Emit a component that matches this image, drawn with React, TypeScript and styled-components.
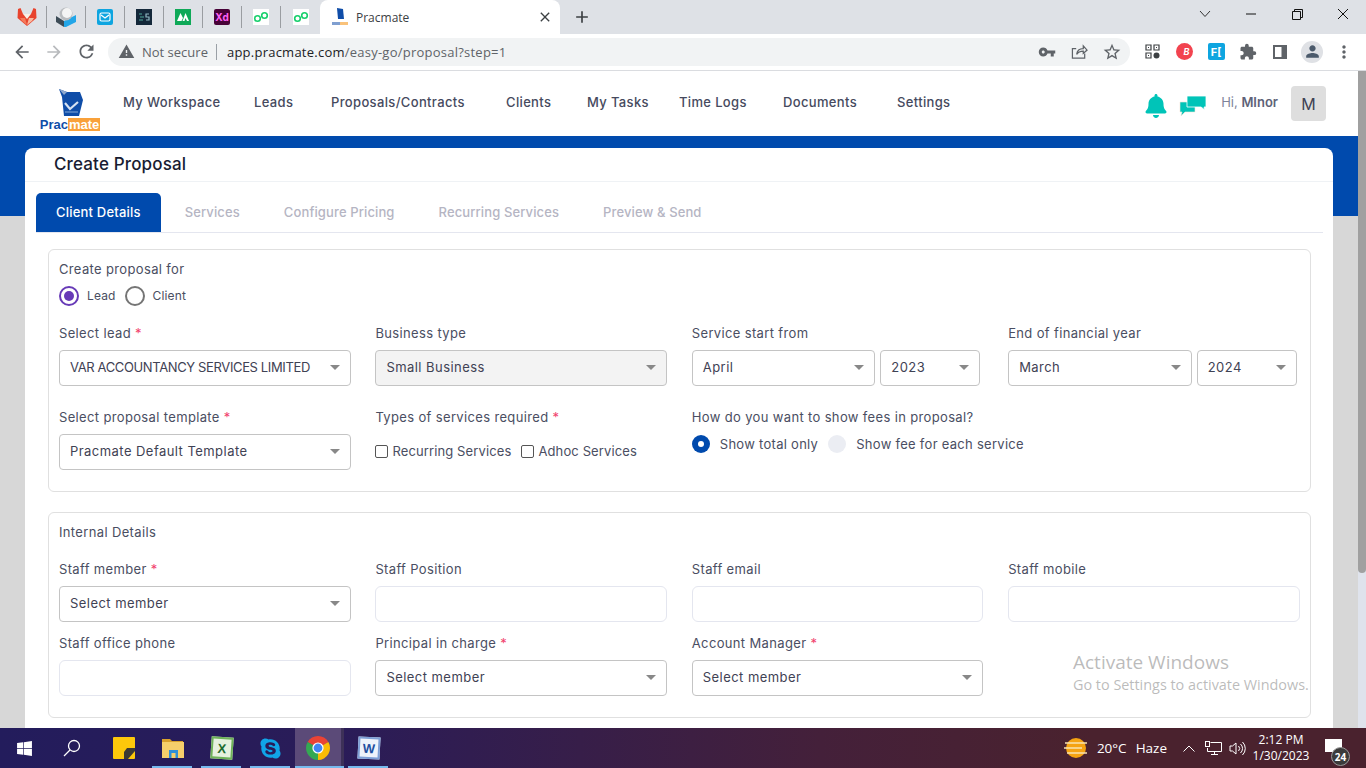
import React from "react";
import styled, { createGlobalStyle } from "styled-components";
import {
    MdAdd,
    MdArrowBack,
    MdArrowForward,
    MdClose,
    MdExtension,
    MdMoreVert,
    MdPerson,
    MdRefresh,
    MdStarBorder,
    MdVpnKey,
    MdWarning,
} from "react-icons/md";
import { FaBell, FaSkype, FaWindows } from "react-icons/fa";

const NAV_ITEMS = [
    { label: "My Workspace", width: 131 },
    { label: "Leads", width: 77 },
    { label: "Proposals/Contracts", width: 175 },
    { label: "Clients", width: 81 },
    { label: "My Tasks", width: 92 },
    { label: "Time Logs", width: 104 },
    { label: "Documents", width: 114 },
    { label: "Settings", width: 60 },
];

const TABS = ["Client Details", "Services", "Configure Pricing", "Recurring Services", "Preview & Send"];

const GitlabIcon = () => (
    <svg width="20" height="20" viewBox="0 0 20 20">
        <polygon points="1,2 3.5,1 6,7 14,7 16.5,1 19,2 19.5,11 10,19 0.5,11" fill="#e8432d" />
        <polygon points="6,7 14,7 10,12" fill="#f9efe6" />
        <polygon points="3,11 8,11 10,18 5,14" fill="#f47b5b" />
        <polygon points="12,11 17,11 15,14 10,18" fill="#f9b9a0" />
    </svg>
);

const BallIcon = () => (
    <svg width="20" height="20" viewBox="0 0 20 20">
        <polygon points="0,9 8,14 8,20 0,15" fill="#3d4c57" />
        <polygon points="8,14 20,8 20,15 10,20 8,20" fill="#23a6e8" />
        <circle cx="10" cy="7" r="6.5" fill="#b9bcbf" />
        <circle cx="11" cy="6" r="5" fill="#f4f4f4" />
    </svg>
);

const MailIcon = () => (
    <svg width="16" height="16" viewBox="0 0 16 16">
        <rect width="16" height="16" rx="2" fill="#0ea5e0" />
        <rect x="3" y="4" width="10" height="8" rx="1.5" fill="none" stroke="#fff" strokeWidth="1.2" />
        <path d="M4 6l4 3 4-3" fill="none" stroke="#fff" strokeWidth="1.2" />
    </svg>
);

const DarkIcon = () => (
    <svg width="16" height="16" viewBox="0 0 16 16">
        <rect width="16" height="16" fill="#14283a" />
        <path d="M3 5h3M4 8h4M3 11h4" stroke="#4fa79a" strokeWidth="1.2" />
        <path d="M13 5H10v3h3v3h-3" fill="none" stroke="#8fb7c2" strokeWidth="1.2" />
    </svg>
);

const GreenMIcon = () => (
    <svg width="16" height="16" viewBox="0 0 16 16">
        <rect width="16" height="16" fill="#0fa958" />
        <path d="M2 12l3.5-8L8 9l-1.5 3zM7.5 12l3-8L14 12h-2l-1.5-3L9.5 12z" fill="#fff" />
    </svg>
);

const LinkIcon = () => (
    <svg width="16" height="16" viewBox="0 0 16 16">
        <rect width="16" height="16" fill="#fff" />
        <circle cx="4.5" cy="9.5" r="2.8" fill="none" stroke="#16cf6b" strokeWidth="1.6" />
        <circle cx="11.5" cy="6.5" r="2.8" fill="none" stroke="#16cf6b" strokeWidth="1.6" />
    </svg>
);

const DocMark = () => (
    <svg width="25" height="28" viewBox="0 0 25 28">
        <polygon points="1,0 9,3 22,3 25,11 21,27 6,27 4,8" fill="#0f4da8" />
        <polygon points="1,0 9,3 6,6" fill="#8fa9cf" />
        <path d="M7 14l5 6 8-7" fill="none" stroke="#d6e2f2" strokeWidth="2.2" />
        <path d="M7 23h13" stroke="#5f8bc9" strokeWidth="1.5" />
    </svg>
);

const TabLogo = () => (
    <svg width="16" height="18" viewBox="0 0 16 18">
        <polygon points="5,0 11,1 12,11 6,11" fill="#0f4da8" />
        <rect x="0" y="14" width="8" height="3" fill="#7f9fd0" />
        <rect x="8" y="14" width="8" height="3" fill="#f9c27a" />
    </svg>
);

const ShareIcon = () => (
    <svg width="17" height="17" viewBox="0 0 18 18" fill="none" stroke="#5f6368" strokeWidth="1.3">
        <path d="M14.5 11v5h-13V6h4" />
        <path d="M6 12c.5-4 3.5-6 7-6V3l4 4.5L13 11V8.5c-3 0-5.5 1-7 3.5z" />
    </svg>
);

const QrIcon = () => (
    <svg width="15" height="15" viewBox="0 0 15 15">
        <rect width="15" height="15" fill="#fff" />
        <path d="M1 1h5v5H1zM9 1h5v5H9zM1 9h5v5H1z" fill="none" stroke="#3c4043" strokeWidth="1.2" />
        <path d="M3 3h1v1H3zM11 3h1v1h-1zM3 11h1v1H3z" fill="#3c4043" />
        <circle cx="11.5" cy="11.5" r="3" fill="#3c4043" />
    </svg>
);

const PanelIcon = () => (
    <svg width="14" height="14" viewBox="0 0 14 14">
        <rect x="1" y="1" width="12" height="12" fill="none" stroke="#5f6368" strokeWidth="2" />
        <rect x="8.5" y="1" width="4.5" height="12" fill="#5f6368" />
    </svg>
);

const ChatIcon = () => (
    <svg width="28" height="22" viewBox="0 0 28 22">
        <path d="M1 7h15v10H6l-4 4 1-4H1z" fill="#00c4b8" stroke="#f5e6d8" strokeWidth="0.6" />
        <path d="M8 1h19v11h-2l1 3-4-3H8z" fill="#00c4b8" stroke="#fff" strokeWidth="0.8" />
    </svg>
);

const SearchGlass = () => (
    <svg width="18" height="18" viewBox="0 0 18 18" fill="none" stroke="#fff" strokeWidth="1.3">
        <circle cx="11" cy="7" r="5.5" />
        <path d="M7 11l-6 6" />
    </svg>
);

const StickyIcon = () => (
    <svg width="22" height="22" viewBox="0 0 22 22">
        <rect width="22" height="22" rx="1" fill="#fdc80b" />
        <polygon points="11,22 11,15 14,11 22,11 22,14 15,22" fill="#3d3a33" />
    </svg>
);

const FolderIcon = () => (
    <svg width="22" height="20" viewBox="0 0 22 20">
        <path d="M0 1h8l2 2h11v3H0z" fill="#d9a12c" />
        <rect y="4" width="22" height="16" fill="#f6cf6b" />
        <rect x="7" y="12" width="9" height="8" fill="#2f8fd8" />
        <rect x="9.5" y="15" width="4" height="5" fill="#f6cf6b" />
    </svg>
);

const ChromeIcon = () => (
    <svg width="24" height="24" viewBox="0 0 24 24">
        <path d="M12 12L1.61 6A12 12 0 0 1 22.39 6Z" fill="#ea4335" />
        <path d="M12 12L22.39 6A12 12 0 0 1 12 24Z" fill="#fbbc04" />
        <path d="M12 12L12 24A12 12 0 0 1 1.61 6Z" fill="#34a853" />
        <circle cx="12" cy="12" r="5.6" fill="#fff" />
        <circle cx="12" cy="12" r="4.4" fill="#4285f4" />
    </svg>
);

const WeatherIcon = () => (
    <svg width="24" height="20" viewBox="0 0 24 20">
        <circle cx="12" cy="10" r="10" fill="#f5a312" />
        <path d="M1 5h22M0 10h18M3 15h20" stroke="#f9e3b0" strokeWidth="1.6" />
    </svg>
);

const NetworkIcon = () => (
    <svg width="17" height="15" viewBox="0 0 17 15" fill="none" stroke="#fff" strokeWidth="1">
        <path d="M5.5 1.5h11v9h-14V7" />
        <rect x="0.5" y="0.5" width="4" height="5" />
        <path d="M9.5 10.5v3M6 13.5h7" />
    </svg>
);

const VolumeIcon = () => (
    <svg width="17" height="15" viewBox="0 0 17 15" fill="none" stroke="#fff" strokeWidth="1">
        <path d="M1 5h2.5L7 2v11L3.5 10H1z" />
        <path d="M9.5 5a3.5 3.5 0 0 1 0 5M11.5 3a6 6 0 0 1 0 9M13.5 1a9 9 0 0 1 0 13" />
    </svg>
);

const Select = ({ value, disabled, caps }: { value: string; disabled?: boolean; caps?: boolean }) => (
    <SelectBox $disabled={disabled} $caps={caps}>
        <SelectText>{value}</SelectText>
        <Caret />
    </SelectBox>
);

const Radio = ({ checked }: { checked?: boolean }) => <RadioMark $checked={checked} />;

const FeeRadio = ({ checked }: { checked?: boolean }) => <FeeMark $checked={checked} />;

const App = () => {
    return (
        <Screen>
            <GlobalStyle />
            <TabStrip>
                <PinnedTab><GitlabIcon /></PinnedTab>
                <PinnedTab><BallIcon /></PinnedTab>
                <PinnedTab><MailIcon /></PinnedTab>
                <PinnedTab><DarkIcon /></PinnedTab>
                <PinnedTab><GreenMIcon /></PinnedTab>
                <PinnedTab><XdIcon>Xd</XdIcon></PinnedTab>
                <PinnedTab><LinkIcon /></PinnedTab>
                <PinnedTab $last><LinkIcon /></PinnedTab>
                <ActiveTab>
                    <TabFavicon><TabLogo /></TabFavicon>
                    <TabTitle>Pracmate</TabTitle>
                    <MdClose size={16} color="#3c4043" />
                </ActiveTab>
                <NewTab><MdAdd size={20} color="#3c4043" /></NewTab>
                <WindowControls>
                    <WindowButton>
                        <svg width="12" height="8" viewBox="0 0 12 8" fill="none" stroke="#333" strokeWidth="1"><path d="M1 1l5 5.5L11 1" /></svg>
                    </WindowButton>
                    <WindowButton>
                        <svg width="12" height="2" viewBox="0 0 12 2" stroke="#111" strokeWidth="1"><path d="M1 1h10" /></svg>
                    </WindowButton>
                    <WindowButton>
                        <svg width="11" height="11" viewBox="0 0 11 11" fill="none" stroke="#111" strokeWidth="1"><path d="M.5 2.5h8v8h-8zM2.5 2.5v-2h8v8h-2" /></svg>
                    </WindowButton>
                    <WindowButton>
                        <svg width="12" height="12" viewBox="0 0 12 12" stroke="#111" strokeWidth="1"><path d="M1 1l10 10M11 1L1 11" /></svg>
                    </WindowButton>
                </WindowControls>
            </TabStrip>

            <Toolbar>
                <ToolButton><MdArrowBack size={20} color="#5f6368" /></ToolButton>
                <ToolButton><MdArrowForward size={20} color="#b8babd" /></ToolButton>
                <ToolButton><MdRefresh size={21} color="#5f6368" /></ToolButton>
                <Omnibox>
                    <MdWarning size={17} color="#5f6368" />
                    <NotSecure>Not secure</NotSecure>
                    <OmniDivider />
                    <Url>
                        <UrlHost>app.pracmate.com</UrlHost>/easy-go/proposal?step=1
                    </Url>
                    <OmniActions>
                        <OmniAction><MdVpnKey size={18} color="#5f6368" /></OmniAction>
                        <OmniAction><ShareIcon /></OmniAction>
                        <OmniAction><MdStarBorder size={20} color="#5f6368" /></OmniAction>
                    </OmniActions>
                </Omnibox>
                <Extensions>
                    <ToolSlot><QrIcon /></ToolSlot>
                    <ToolSlot><RedBadge>B</RedBadge></ToolSlot>
                    <ToolSlot><BlueBadge>F[</BlueBadge></ToolSlot>
                    <ToolSlot><MdExtension size={18} color="#5f6368" /></ToolSlot>
                    <ToolSlot><PanelIcon /></ToolSlot>
                    <ToolSlot><ProfileCircle><MdPerson size={19} color="#4b5a6b" /></ProfileCircle></ToolSlot>
                    <ToolSlot><MdMoreVert size={20} color="#5f6368" /></ToolSlot>
                </Extensions>
            </Toolbar>

            <Viewport>
                <Page>
                    <Header>
                        <Logo>
                            <DocMark />
                            <LogoText>
                                <LogoPrac>Prac</LogoPrac>
                                <LogoMate>mate</LogoMate>
                            </LogoText>
                        </Logo>
                        <Nav>
                            {NAV_ITEMS.map((item) => (
                                <NavItem key={item.label} $width={item.width}>{item.label}</NavItem>
                            ))}
                        </Nav>
                        <UserArea>
                            <BellSlot><FaBell size={24} color="#00c4b8" /></BellSlot>
                            <ChatSlot><ChatIcon /></ChatSlot>
                            <Greeting>Hi, <strong>MInor</strong></Greeting>
                            <Avatar>M</Avatar>
                        </UserArea>
                    </Header>

                    <Main>
                        <Card>
                            <CardTitle>Create Proposal</CardTitle>
                            <Tabs>
                                {TABS.map((tab, i) => (
                                    <Tab key={tab} $active={i === 0}>{tab}</Tab>
                                ))}
                            </Tabs>

                            <Panel>
                                <PanelHeading>Create proposal for</PanelHeading>
                                <RadioRow>
                                    <Radio checked />
                                    <RadioLabel>Lead</RadioLabel>
                                    <Radio />
                                    <RadioLabel>Client</RadioLabel>
                                </RadioRow>
                                <FieldGrid $rowGap={21}>
                                    <Field>
                                        <Label>Select lead <Required>*</Required></Label>
                                        <Select value="VAR ACCOUNTANCY SERVICES LIMITED" caps />
                                    </Field>
                                    <Field>
                                        <Label>Business type</Label>
                                        <Select value="Small Business" disabled />
                                    </Field>
                                    <Field>
                                        <Label>Service start from</Label>
                                        <SelectPair>
                                            <Select value="April" />
                                            <Select value="2023" />
                                        </SelectPair>
                                    </Field>
                                    <Field>
                                        <Label>End of financial year</Label>
                                        <SelectPair>
                                            <Select value="March" />
                                            <Select value="2024" />
                                        </SelectPair>
                                    </Field>
                                    <Field>
                                        <Label>Select proposal template <Required>*</Required></Label>
                                        <Select value="Pracmate Default Template" />
                                    </Field>
                                    <Field>
                                        <Label>Types of services required <Required>*</Required></Label>
                                        <CheckRow>
                                            <CheckBox />
                                            <CheckLabel>Recurring Services</CheckLabel>
                                            <CheckBox />
                                            <CheckLabel>Adhoc Services</CheckLabel>
                                        </CheckRow>
                                    </Field>
                                    <WideField>
                                        <Label>How do you want to show fees in proposal?</Label>
                                        <FeeRow>
                                            <FeeRadio checked />
                                            <FeeLabel>Show total only</FeeLabel>
                                            <FeeRadio />
                                            <FeeLabel>Show fee for each service</FeeLabel>
                                        </FeeRow>
                                    </WideField>
                                </FieldGrid>
                            </Panel>

                            <Panel>
                                <InternalHeading>Internal Details</InternalHeading>
                                <FieldGrid $rowGap={11}>
                                    <Field>
                                        <Label>Staff member <Required>*</Required></Label>
                                        <Select value="Select member" />
                                    </Field>
                                    <Field>
                                        <Label>Staff Position</Label>
                                        <TextInput />
                                    </Field>
                                    <Field>
                                        <Label>Staff email</Label>
                                        <TextInput />
                                    </Field>
                                    <Field>
                                        <Label>Staff mobile</Label>
                                        <TextInput />
                                    </Field>
                                    <Field>
                                        <Label>Staff office phone</Label>
                                        <TextInput />
                                    </Field>
                                    <Field>
                                        <Label>Principal in charge <Required>*</Required></Label>
                                        <Select value="Select member" />
                                    </Field>
                                    <Field>
                                        <Label>Account Manager <Required>*</Required></Label>
                                        <Select value="Select member" />
                                    </Field>
                                </FieldGrid>
                            </Panel>
                        </Card>
                    </Main>

                    <Watermark>
                        <WatermarkTitle>Activate Windows</WatermarkTitle>
                        <WatermarkText>Go to Settings to activate Windows.</WatermarkText>
                    </Watermark>
                </Page>
                <Scrollbar>
                    <ScrollThumb />
                </Scrollbar>
            </Viewport>

            <Taskbar>
                <TaskButton><FaWindows size={17} color="#fff" /></TaskButton>
                <TaskButton><SearchGlass /></TaskButton>
                <TaskApps>
                    <TaskButton $wide><StickyIcon /></TaskButton>
                    <TaskButton $wide $open><FolderIcon /></TaskButton>
                    <TaskButton $wide $open><ExcelIcon><span>X</span></ExcelIcon></TaskButton>
                    <TaskButton $wide $open><FaSkype size={23} color="#10a5e8" /></TaskButton>
                    <TaskButton $wide $open $active><ChromeIcon /></TaskButton>
                    <TaskButton $wide $open><WordIcon><span>W</span></WordIcon></TaskButton>
                </TaskApps>
                <Tray>
                    <WeatherIcon />
                    <TrayText>20°C</TrayText>
                    <TrayText>Haze</TrayText>
                    <TraySlot $first>
                        <svg width="12" height="7" viewBox="0 0 12 7" fill="none" stroke="#fff" strokeWidth="1"><path d="M.5 6.5L6 1l5.5 5.5" /></svg>
                    </TraySlot>
                    <TraySlot><NetworkIcon /></TraySlot>
                    <TraySlot><VolumeIcon /></TraySlot>
                    <Clock>
                        <span>2:12 PM</span>
                        <span>1/30/2023</span>
                    </Clock>
                    <Notify>
                        <NotifyBubble />
                        <NotifyCount>24</NotifyCount>
                    </Notify>
                </Tray>
            </Taskbar>
        </Screen>
    );
};

export default App;

const GlobalStyle = createGlobalStyle`
    html, body {
        margin: 0;
        height: 100%;
        overflow: hidden;
        background: #fff;
    }
    * {
        box-sizing: border-box;
    }
`;

const Screen = styled.div`
    display: flex;
    flex-direction: column;
    height: 100vh;
    font-family: Inter, "Liberation Sans", sans-serif;
`;

const TabStrip = styled.div`
    display: flex;
    align-items: center;
    height: 34px;
    flex-shrink: 0;
    padding-left: 8px;
    background: #dee1e6;
`;

const PinnedTab = styled.div<{ $last?: boolean }>`
    display: flex;
    align-items: center;
    justify-content: center;
    width: 39px;
    height: 22px;
    border-right: ${(p) => (p.$last ? "none" : "1px solid #9a9da1")};
`;

const XdIcon = styled.div`
    display: flex;
    align-items: center;
    justify-content: center;
    width: 16px;
    height: 16px;
    border-radius: 2px;
    background: #470137;
    color: #ff61f6;
    font-size: 10px;
    font-weight: 700;
`;

const ActiveTab = styled.div`
    display: flex;
    align-items: center;
    align-self: flex-end;
    width: 240px;
    height: 34px;
    padding: 0 7px 0 12px;
    background: #fff;
    border-radius: 8px 8px 0 0;
`;

const TabFavicon = styled.div`
    display: flex;
    justify-content: center;
    width: 16px;
`;

const TabTitle = styled.div`
    flex: 1;
    margin-left: 8px;
    font-family: "Open Sans", sans-serif;
    font-size: 12px;
    color: #3c4043;
`;

const NewTab = styled.div`
    display: flex;
    margin-left: 12px;
`;

const WindowControls = styled.div`
    display: flex;
    margin-left: auto;
    align-self: flex-start;
`;

const WindowButton = styled.div`
    display: flex;
    align-items: center;
    justify-content: center;
    width: 46px;
    height: 28px;
`;

const Toolbar = styled.div`
    display: flex;
    align-items: center;
    height: 37px;
    flex-shrink: 0;
    padding: 0 6px 1px 6px;
    background: #fff;
    border-bottom: 1px solid #dadce0;
`;

const ToolButton = styled.div`
    display: flex;
    align-items: center;
    justify-content: center;
    width: 32px;
    height: 28px;
`;

const Omnibox = styled.div`
    display: flex;
    align-items: center;
    width: 1022px;
    height: 28px;
    margin-left: 6px;
    padding: 0 2px 0 10px;
    border-radius: 14px;
    background: #f1f3f4;
    font-family: "Open Sans", sans-serif;
    font-size: 13px;
`;

const NotSecure = styled.span`
    margin-left: 7px;
    color: #5f6368;
`;

const OmniDivider = styled.div`
    width: 1px;
    height: 16px;
    margin: 0 10px 0 8px;
    background: #9aa0a6;
`;

const Url = styled.span`
    color: #5f6368;
    letter-spacing: 0.24px;
`;

const UrlHost = styled.span`
    color: #202124;
`;

const OmniActions = styled.div`
    display: flex;
    margin-left: auto;
`;

const OmniAction = styled.div`
    display: flex;
    align-items: center;
    justify-content: center;
    width: 32.5px;
`;

const Extensions = styled.div`
    display: flex;
    margin-left: 6px;
`;

const ToolSlot = styled.div`
    display: flex;
    align-items: center;
    justify-content: center;
    width: 32px;
    height: 28px;
`;

const RedBadge = styled.div`
    display: flex;
    align-items: center;
    justify-content: flex-end;
    width: 17px;
    height: 17px;
    padding-right: 3px;
    border-radius: 50%;
    background: #f2434f;
    color: #fff;
    font-size: 9px;
    font-weight: 700;
    font-style: italic;
`;

const BlueBadge = styled.div`
    display: flex;
    align-items: center;
    justify-content: center;
    width: 17px;
    height: 17px;
    border-radius: 2px;
    background: #0ea5e0;
    color: #fff;
    font-size: 11px;
    font-weight: 700;
`;

const ProfileCircle = styled.div`
    display: flex;
    align-items: center;
    justify-content: center;
    width: 22px;
    height: 22px;
    border-radius: 50%;
    background: #dfe1e5;
`;

const Viewport = styled.div`
    display: flex;
    flex: 1;
    min-height: 0;
`;

const Page = styled.div`
    position: relative;
    flex: 1;
    display: flex;
    flex-direction: column;
    min-width: 0;
    overflow: hidden;
    background: #d7d7d7;
`;

const Header = styled.div`
    display: flex;
    align-items: center;
    height: 65px;
    flex-shrink: 0;
    background: #fff;
`;

const Logo = styled.div`
    display: flex;
    flex-direction: column;
    align-items: center;
    width: 60px;
    margin: 12px 0 0 40px;
    line-height: 0;
`;

const LogoText = styled.div`
    display: flex;
    align-items: center;
    height: 13px;
    margin-top: 1px;
    font-family: "Liberation Sans", sans-serif;
    font-size: 13px;
    font-weight: 700;
    line-height: 13px;
`;

const LogoPrac = styled.span`
    color: #0f4da8;
`;

const LogoMate = styled.span`
    padding: 0 1px;
    background: #f9a13a;
    color: #fff;
`;

const Nav = styled.nav`
    display: flex;
    margin-left: 23px;
    padding-bottom: 3px;
`;

const NavItem = styled.div<{ $width: number }>`
    width: ${(p) => p.$width}px;
    font-size: 13px;
    font-weight: 500;
    letter-spacing: 0.35px;
    white-space: nowrap;
    color: #464a5e;
`;

const UserArea = styled.div`
    display: flex;
    align-items: center;
    margin-left: auto;
    margin-right: 32px;
`;

const BellSlot = styled.div`
    display: flex;
    margin-top: 4px;
`;

const ChatSlot = styled.div`
    display: flex;
    margin: 4px 0 0 11px;
`;

const Greeting = styled.div`
    margin: 0 0 4px 14px;
    font-size: 13px;
    color: #7e8299;
    strong {
        font-weight: 600;
        color: #5e6278;
    }
`;

const Avatar = styled.div`
    display: flex;
    align-items: center;
    justify-content: center;
    width: 35px;
    height: 35px;
    margin-left: 13px;
    border-radius: 4px;
    background: #dedede;
    color: #3f4254;
    font-size: 16px;
`;

const Main = styled.div`
    flex: 1;
    display: flex;
    min-height: 0;
    padding: 12px 25px 0;
    background: linear-gradient(#004aad 80px, #d7d7d7 80px);
`;

const Card = styled.div`
    flex: 1;
    min-width: 0;
    background: #fff;
    border-radius: 8px 8px 0 0;
`;

const CardTitle = styled.div`
    display: flex;
    align-items: center;
    height: 34px;
    padding: 0 0 2px 29px;
    border-bottom: 1px solid #eff2f5;
    font-size: 17px;
    font-weight: 500;
    letter-spacing: 0.15px;
    color: #181c32;
`;

const Tabs = styled.div`
    display: flex;
    gap: 4px;
    height: 40px;
    margin: 11px 10px 0 11px;
    border-bottom: 1px solid #e4e6ef;
`;

const Tab = styled.div<{ $active?: boolean }>`
    display: flex;
    align-items: center;
    padding: 0 20px 1px;
    height: 39px;
    border-radius: 5px 5px 0 0;
    background: ${(p) => (p.$active ? "#004aad" : "transparent")};
    color: ${(p) => (p.$active ? "#fff" : "#b5b5c3")};
    font-size: 13px;
    font-weight: 500;
    letter-spacing: ${(p) => (p.$active ? 0.2 : 0.12)}px;
`;

const Panel = styled.section`
    margin: 16px 22px 20px 23px;
    padding: 9px 10px 21px;
    border: 1px solid #e0e0e0;
    border-radius: 6px;
`;

const Text = styled.div`
    height: 20px;
    font-size: 13px;
    line-height: 20px;
    letter-spacing: 0.35px;
    color: #4a4e62;
    white-space: nowrap;
`;

const PanelHeading = styled(Text)``;

const InternalHeading = styled(Text)`
    margin-bottom: 17px;
`;

const RadioRow = styled.div`
    display: flex;
    align-items: center;
    height: 22px;
    margin: 6px 0 16px;
`;

const RadioMark = styled.span<{ $checked?: boolean }>`
    display: flex;
    align-items: center;
    justify-content: center;
    width: 20px;
    height: 20px;
    border-radius: 50%;
    border: 2px solid ${(p) => (p.$checked ? "#673ab7" : "#757575")};
    &::after {
        content: "";
        width: 10px;
        height: 10px;
        border-radius: 50%;
        background: ${(p) => (p.$checked ? "#673ab7" : "transparent")};
    }
`;

const RadioLabel = styled(Text)`
    margin: 0 9px 0 8px;
    font-size: 12px;
    letter-spacing: 0.15px;
`;

const FieldGrid = styled.div<{ $rowGap: number }>`
    display: grid;
    grid-template-columns: repeat(4, 291.6px);
    column-gap: 24.8px;
    row-gap: ${(p) => p.$rowGap}px;
`;

const Field = styled.div`
    min-width: 0;
`;

const WideField = styled(Field)`
    grid-column: span 2;
`;

const Label = styled(Text)`
    margin-bottom: 7px;
`;

const Required = styled.span`
    color: #f1416c;
`;

const SelectBox = styled.div<{ $disabled?: boolean; $caps?: boolean }>`
    position: relative;
    display: flex;
    align-items: center;
    width: 100%;
    height: 36px;
    padding: 0 0 2px 10px;
    border: 1px solid #c4c4c4;
    border-radius: 4px;
    background: ${(p) => (p.$disabled ? "#f3f3f3" : "#fff")};
    font-size: 13px;
    letter-spacing: ${(p) => (p.$caps ? -0.37 : 0.45)}px;
    color: #3f4254;
    white-space: nowrap;
`;

const SelectText = styled.span``;

const Caret = styled.span`
    position: absolute;
    right: 10px;
    top: 14px;
    border-left: 5px solid transparent;
    border-right: 5px solid transparent;
    border-top: 5px solid #888;
`;

const SelectPair = styled.div`
    display: grid;
    grid-template-columns: 183.5px 100px;
    gap: 5px;
`;

const TextInput = styled.input`
    display: block;
    width: 100%;
    height: 36px;
    border: 1px solid #e4e6ef;
    border-radius: 6px;
    background: #fff;
`;

const CheckRow = styled.div`
    display: flex;
    align-items: center;
    height: 20px;
    margin-top: 14px;
`;

const CheckBox = styled.span`
    width: 13px;
    height: 13px;
    border: 1px solid #555;
    border-radius: 2px;
    flex-shrink: 0;
`;

const CheckLabel = styled(Text)`
    margin: 0 10px 0 4px;
    letter-spacing: 0.12px;
`;

const FeeRow = styled.div`
    display: flex;
    align-items: center;
    height: 20px;
    margin-top: 4px;
`;

const FeeMark = styled.span<{ $checked?: boolean }>`
    display: flex;
    align-items: center;
    justify-content: center;
    width: 18px;
    height: 18px;
    border-radius: 50%;
    background: ${(p) => (p.$checked ? "#004aad" : "#ebedf3")};
    &::after {
        content: "";
        width: 6px;
        height: 6px;
        border-radius: 50%;
        background: ${(p) => (p.$checked ? "#fff" : "transparent")};
    }
`;

const FeeLabel = styled(Text)`
    margin: 0 10px 0 10px;
    letter-spacing: 0.28px;
`;

const Watermark = styled.div`
    position: absolute;
    left: 1073px;
    top: 578px;
    font-family: "Open Sans", sans-serif;
    color: rgba(120, 120, 120, 0.5);
    white-space: nowrap;
    pointer-events: none;
`;

const WatermarkTitle = styled.div`
    font-size: 19px;
    line-height: 26px;
`;

const WatermarkText = styled.div`
    margin-top: 1px;
    font-size: 14.4px;
    line-height: 18px;
`;

const Scrollbar = styled.div`
    width: 8px;
    flex-shrink: 0;
    background: #dfe3ec;
`;

const ScrollThumb = styled.div`
    height: 502px;
    border-radius: 0 0 4px 4px;
    background: #a0a0a0;
`;

const Taskbar = styled.div`
    display: flex;
    align-items: stretch;
    height: 40px;
    flex-shrink: 0;
    background: linear-gradient(90deg, #231c5c 0%, #2a1c58 25%, #44203a 60%, #4a222e 80%, #4a222e 100%);
`;

const TaskButton = styled.div<{ $wide?: boolean; $open?: boolean; $active?: boolean }>`
    position: relative;
    display: flex;
    align-items: center;
    justify-content: center;
    width: ${(p) => (p.$wide ? 49 : 48)}px;
    background: ${(p) => (p.$active ? "#5b4a78" : "transparent")};
    border-right: ${(p) => (p.$active ? "3px solid #3d3158" : "none")};
    &::after {
        content: "";
        display: ${(p) => (p.$open ? "block" : "none")};
        position: absolute;
        left: ${(p) => (p.$active ? 0 : 4)}px;
        right: ${(p) => (p.$active ? -3 : 5)}px;
        bottom: 0;
        height: 2px;
        background: #76b9ed;
    }
`;

const TaskApps = styled.div`
    display: flex;
    margin-left: 3px;
`;

const ExcelIcon = styled.div`
    display: flex;
    align-items: center;
    justify-content: center;
    width: 22px;
    height: 22px;
    border: 2px solid #6fb25a;
    background: #e6f1df;
    transform: rotate(4deg);
    span {
        color: #1e6b30;
        font-size: 13px;
        font-weight: 800;
        font-family: "Liberation Sans", sans-serif;
    }
`;

const WordIcon = styled.div`
    display: flex;
    align-items: center;
    justify-content: center;
    width: 22px;
    height: 22px;
    border: 2px solid #7d9fd6;
    background: #eef3fb;
    transform: rotate(3deg);
    span {
        color: #1f4fa0;
        font-size: 13px;
        font-weight: 800;
        font-family: "Liberation Sans", sans-serif;
    }
`;

const Tray = styled.div`
    display: flex;
    align-items: center;
    margin-left: auto;
    padding-right: 13px;
    font-family: "Open Sans", sans-serif;
    color: #fff;
`;

const TrayText = styled.span`
    margin-left: 9px;
    font-size: 13.5px;
`;

const TraySlot = styled.div<{ $first?: boolean }>`
    display: flex;
    align-items: center;
    justify-content: center;
    width: 24px;
    margin-left: ${(p) => (p.$first ? 10 : 0)}px;
`;

const Clock = styled.div`
    display: flex;
    flex-direction: column;
    align-items: center;
    width: 64px;
    font-size: 12px;
    line-height: 16px;
`;

const Notify = styled.div`
    position: relative;
    display: flex;
    align-items: center;
    justify-content: center;
    width: 40px;
    height: 100%;
`;

const NotifyBubble = styled.div`
    width: 17px;
    height: 13px;
    margin-top: -6px;
    background: #fff;
`;

const NotifyCount = styled.div`
    position: absolute;
    left: 18px;
    top: 19px;
    display: flex;
    align-items: center;
    justify-content: center;
    width: 19px;
    height: 19px;
    border-radius: 50%;
    border: 1px solid #999;
    background: #3b3b3b;
    font-size: 10px;
    font-weight: 700;
`;
